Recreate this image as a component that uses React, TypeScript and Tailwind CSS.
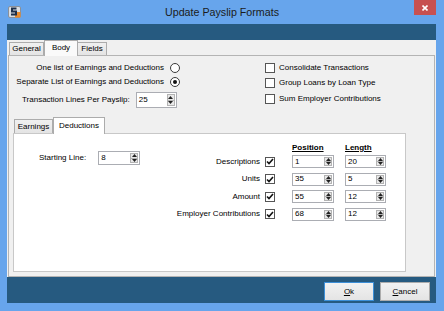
import React from "react";

function AppIcon() {
  return (
    <svg width="13" height="12" viewBox="0 0 13 12">
      <rect x="0.5" y="0.5" width="12" height="11" rx="1.5" fill="#d9dde2" stroke="#8a9099" />
      <rect x="7" y="6" width="5.5" height="5.5" fill="#e98a2c" />
      <path d="M8.5 2.5 H4 V5.5 H8 V8.5 H3" stroke="#1d2f4a" strokeWidth="2" fill="none" />
    </svg>
  );
}

function Arrows() {
  return (
    <div className="flex flex-col w-[8px] border border-[#b3b3b3] bg-[#e8e8e8]">
      <div className="flex-1 flex items-center justify-center border-b border-[#b3b3b3]">
        <svg width="5" height="3" viewBox="0 0 5 3">
          <path d="M0 3 L2.5 0 L5 3 Z" fill="#222" />
        </svg>
      </div>
      <div className="flex-1 flex items-center justify-center">
        <svg width="5" height="3" viewBox="0 0 5 3">
          <path d="M0 0 L5 0 L2.5 3 Z" fill="#222" />
        </svg>
      </div>
    </div>
  );
}

function Spin({ value, className }: { value: string; className: string }) {
  return (
    <div className={`flex items-stretch border border-[#abadb3] bg-white p-px ${className}`}>
      <span className="flex-1 flex items-center pl-px text-[8px] leading-none">{value}</span>
      <Arrows />
    </div>
  );
}

function Radio({ checked }: { checked?: boolean }) {
  return (
    <span className="w-[10px] h-[10px] shrink-0 rounded-full border border-[#3a3a3a] bg-white flex items-center justify-center">
      {checked && <span className="w-[4px] h-[4px] rounded-full bg-[#111]" />}
    </span>
  );
}

function Check({ checked }: { checked?: boolean }) {
  return (
    <span className="w-[10px] h-[10px] shrink-0 border border-[#555] bg-white flex items-center justify-center">
      {checked && (
        <svg width="8" height="7" viewBox="0 0 8 7">
          <path d="M1 3.5 L3 5.5 L7 1" stroke="#111" strokeWidth="1.6" fill="none" />
        </svg>
      )}
    </span>
  );
}

const rows = [
  { label: "Descriptions", pos: "1", len: "20" },
  { label: "Units", pos: "35", len: "5" },
  { label: "Amount", pos: "55", len: "12" },
  { label: "Employer Contributions", pos: "68", len: "12" },
];

export default function App() {
  return (
    <div className="w-[444px] h-[311px] bg-[#67a5ec] flex flex-col font-['Liberation_Sans',Arial,sans-serif] text-black select-none">
      {/* Title bar */}
      <div className="h-[24px] grid grid-cols-[1fr_auto_1fr] items-center">
        <div className="pl-[8px] flex items-center">
          <AppIcon />
        </div>
        <div className="text-[10.7px] leading-none text-[#1b1b1b]">Update Payslip Formats</div>
        <div className="flex justify-end self-start pr-[8px]">
          <div className="w-[22px] h-[15px] bg-[#c75050] flex items-center justify-center">
            <svg width="6" height="6" viewBox="0 0 6 6">
              <path d="M0.5 0.5 L5.5 5.5 M5.5 0.5 L0.5 5.5" stroke="#fff" strokeWidth="1.6" />
            </svg>
          </div>
        </div>
      </div>

      {/* Client area */}
      <div className="flex-1 ml-[7px] mr-[8px] flex flex-col">
        <div className="h-[16px] bg-[#265a80]" />

        <div className="flex-1 bg-[#f0f0f0] flex flex-col px-px">
          {/* Outer tabs */}
          <div className="h-[15px] flex items-end pl-px text-[8px] leading-none">
            <div className="w-[35px] h-[13px] border border-b-0 border-[#acacac] bg-linear-to-b from-[#f0f0f0] to-[#e4e4e4] flex items-center justify-center">
              General
            </div>
            <div className="relative z-10 -mb-px w-[34px] h-[16px] border border-b-0 border-[#acacac] bg-[#fafafa] flex items-start justify-center pt-[3px]">
              Body
            </div>
            <div className="w-[29px] h-[13px] border border-b-0 border-l-0 border-[#acacac] bg-linear-to-b from-[#f0f0f0] to-[#e4e4e4] flex items-center justify-center">
              Fields
            </div>
          </div>

          {/* Body panel */}
          <div className="flex-1 border border-[#b4b4b4] flex flex-col pb-[4px]">
            <div className="h-[61px] flex text-[8px] leading-none">
              <div className="w-[256px] flex flex-col pt-[5px]">
                <div className="h-[14px] flex items-center gap-[6px]">
                  <span className="w-[155px] text-right">One list of Earnings and Deductions</span>
                  <Radio />
                </div>
                <div className="h-[14px] flex items-center gap-[6px]">
                  <span className="w-[155px] text-right">Separate List of Earnings and Deductions</span>
                  <Radio checked />
                </div>
                <div className="mt-[3px] flex items-center gap-[6px] pl-[13px]">
                  <span>Transaction Lines Per Payslip:</span>
                  <Spin value="25" className="w-[41px] h-[16px]" />
                </div>
              </div>
              <div className="flex flex-col pt-[4px]">
                <div className="h-[15px] flex items-center gap-[4px]">
                  <Check />
                  <span>Consolidate Transactions</span>
                </div>
                <div className="h-[16px] flex items-center gap-[4px]">
                  <Check />
                  <span>Group Loans by Loan Type</span>
                </div>
                <div className="h-[16px] flex items-center gap-[4px]">
                  <Check />
                  <span>Sum Employer Contributions</span>
                </div>
              </div>
            </div>

            {/* Inner tabs */}
            <div className="h-[16px] flex items-end pl-[5px] text-[8px] leading-none">
              <div className="w-[39px] h-[14px] border border-b-0 border-[#acacac] bg-linear-to-b from-[#f0f0f0] to-[#e4e4e4] flex items-center justify-center">
                Earnings
              </div>
              <div className="relative z-10 -mb-px w-[52px] h-[17px] border border-b-0 border-[#acacac] bg-white flex items-start justify-center pt-[4px]">
                Deductions
              </div>
            </div>

            {/* Inner panel */}
            <div className="flex-1 ml-[4px] w-[393px] border border-[#c8c8c8] bg-white flex text-[8px] leading-none">
              <div className="w-[156px] pl-[25px] pt-[17px] flex items-start gap-[12px]">
                <div className="h-[14px] flex items-center">Starting Line:</div>
                <Spin value="8" className="w-[42px] h-[14px]" />
              </div>
              <div className="flex flex-col pt-[9px]">
                <div className="h-[10px] flex items-center font-bold underline">
                  <span className="ml-[122px] w-[42px]">Position</span>
                  <span className="ml-[11px]">Length</span>
                </div>
                {rows.map((r) => (
                  <div key={r.label} className="h-[17.5px] flex items-center">
                    <span className="w-[90px] text-right">{r.label}</span>
                    <span className="ml-[5px]">
                      <Check checked />
                    </span>
                    <Spin value={r.pos} className="ml-[17px] w-[42px] h-[13px]" />
                    <Spin value={r.len} className="ml-[11px] w-[41px] h-[13px]" />
                  </div>
                ))}
              </div>
            </div>
          </div>
        </div>

        {/* Button band */}
        <div className="h-[26px] bg-[#265a80] flex justify-end items-start pt-[5px] pr-[6px] gap-[6px] text-[8px] leading-none">
          <button className="w-[50px] h-[19px] border border-[#3c8fd8] bg-linear-to-b from-[#f2f2f2] to-[#e4e4e4] flex items-center justify-center">
            <span>
              <span className="underline">O</span>k
            </span>
          </button>
          <button className="w-[50px] h-[19px] border border-[#acacac] bg-linear-to-b from-[#f2f2f2] to-[#e4e4e4] flex items-center justify-center">
            <span>
              <span className="underline">C</span>ancel
            </span>
          </button>
        </div>
      </div>
      <div className="h-[8px]" />
    </div>
  );
}
